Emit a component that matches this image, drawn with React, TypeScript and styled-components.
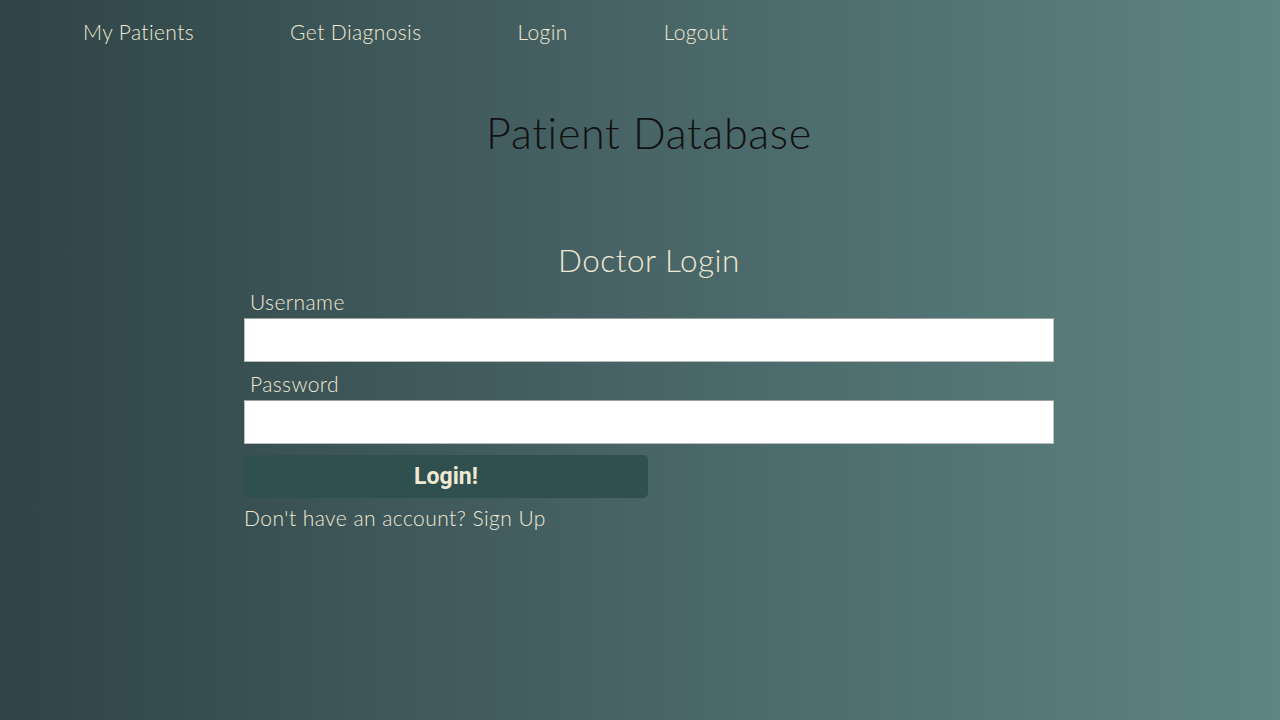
import React from 'react';
import styled, {createGlobalStyle} from 'styled-components';

const GlobalStyle = createGlobalStyle`
  html, body {
    margin: 0;
    padding: 0;
  }
  body {
    min-height: 720px;
    background: linear-gradient(90deg, #2f4447 0%, #466163 45%, #5e8583 100%);
    font-family: "Lato", "Open Sans", sans-serif;
    font-weight: 300;
    color: #efe9d4;
  }
`

const Page = styled.div`
  width: 1280px;
  height: 720px;
  box-sizing: border-box;
`

const Nav = styled.nav`
  display: flex;
  align-items: center;
  gap: 96px;
  height: 62px;
  padding-left: 83px;
`

const NavLink = styled.a`
  font-size: 21px;
  letter-spacing: 0.4px;
  color: #efe9d4;
  text-decoration: none;
  cursor: pointer;
`

const Main = styled.main`
  display: flex;
  flex-direction: column;
  align-items: center;
  padding-left: 18px;
`

const Title = styled.h1`
  margin: 45px 0 0;
  font-size: 43px;
  font-weight: 300;
  letter-spacing: 0.7px;
  color: #111;
  line-height: 52px;
`

const Form = styled.form`
  width: 810px;
  margin-top: 82px;
  display: flex;
  flex-direction: column;
`

const FormTitle = styled.h2`
  margin: 0 0 10px;
  text-align: center;
  font-size: 31.5px;
  font-weight: 300;
  letter-spacing: 0.5px;
  line-height: 38px;
`

const Label = styled.label`
  font-size: 21px;
  letter-spacing: 0.4px;
  padding-left: 6px;
  line-height: 26px;
  margin-bottom: 3px;
`

const Input = styled.input`
  height: 44px;
  box-sizing: border-box;
  border: 1px solid #b9bcbc;
  border-top-color: #9aa0a0;
  background: #fff;
  margin-bottom: 9px;
  font-size: 18px;
  padding: 0 8px;
`

const Button = styled.button`
  width: 404px;
  height: 43px;
  margin-top: 2px;
  border: none;
  border-radius: 5px;
  background: #2f504e;
  color: #efe9d4;
  font-family: "Roboto", "Liberation Sans", sans-serif;
  font-weight: 700;
  font-size: 23px;
  cursor: pointer;
`

const SignUp = styled.p`
  margin: 8px 0 0;
  font-size: 21px;
  letter-spacing: 0.45px;
  line-height: 24px;
`

export default function App() {
  return (
    <Page>
      <GlobalStyle />
      <Nav>
        <NavLink>My Patients</NavLink>
        <NavLink>Get Diagnosis</NavLink>
        <NavLink>Login</NavLink>
        <NavLink>Logout</NavLink>
      </Nav>
      <Main>
        <Title>Patient Database</Title>
        <Form onSubmit={e => e.preventDefault()}>
          <FormTitle>Doctor Login</FormTitle>
          <Label>Username</Label>
          <Input type="text" />
          <Label>Password</Label>
          <Input type="password" />
          <Button type="submit">Login!</Button>
          <SignUp>Don't have an account? Sign Up</SignUp>
        </Form>
      </Main>
    </Page>
  );
}
